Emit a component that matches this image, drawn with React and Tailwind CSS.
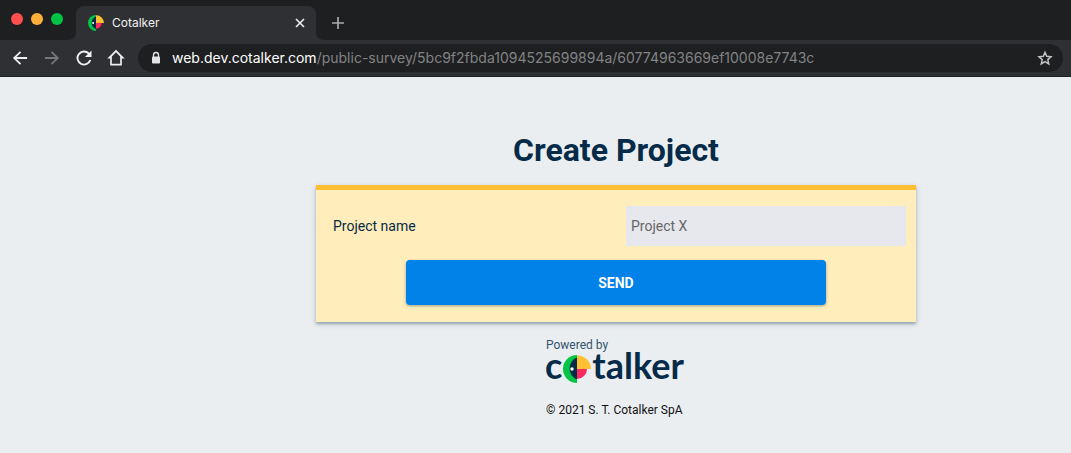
function Mark({ className }) {
  return (
    <svg viewBox="0 0 56 56" className={className} aria-hidden="true">
      <path d="M28 0A28 28 0 0 0 28 56Z" fill="#05c547" />
      <path d="M28 5A21 23 0 0 0 28 49Z" fill="#052b48" />
      <path d="M28 1A27 27 0 0 1 56 28H28Z" fill="#ffc033" />
      <path d="M28 28H48A20 20 0 0 1 28 48Z" fill="#ff2b5e" />
      <circle cx="18" cy="28" r="3.5" fill="#fff" />
    </svg>
  );
}

function NavButton({ label, className, children }) {
  return (
    <button type="button" aria-label={label} className={className}>
      <svg viewBox="0 0 24 24" className="size-5" fill="currentColor" aria-hidden="true">
        {children}
      </svg>
    </button>
  );
}

function TabStrip() {
  return (
    <div className="flex h-10 items-end bg-[#1e1f21]">
      <div className="flex h-10 w-[68px] items-center gap-2 pl-[11px] pb-[2px]">
        <span className="size-3 rounded-full bg-[#ff4f4f]" />
        <span className="size-3 rounded-full bg-[#ffb03b]" />
        <span className="size-3 rounded-full bg-[#00c544]" />
      </div>
      <svg viewBox="0 0 8 8" className="size-2" aria-hidden="true">
        <path d="M0 8A8 8 0 0 0 8 0V8Z" fill="#2f3033" />
      </svg>
      <div className="flex h-[34px] w-60 items-center rounded-t-lg bg-[#2f3033] pl-3 pr-[10px]">
        <Mark className="size-4" />
        <span className="ml-2 flex-1 text-xs text-[#f1f1f1]">Cotalker</span>
        <button type="button" aria-label="Close tab" className="text-[#eeeeee]">
          <svg viewBox="0 0 12 12" className="size-3" fill="none" stroke="currentColor" strokeWidth="1.6" aria-hidden="true">
            <path d="M2 2L10 10M10 2L2 10" />
          </svg>
        </button>
      </div>
      <svg viewBox="0 0 8 8" className="size-2" aria-hidden="true">
        <path d="M8 8A8 8 0 0 1 0 0V8Z" fill="#2f3033" />
      </svg>
      <button type="button" aria-label="New tab" className="flex h-[34px] items-center pl-2 text-[#a9aaac]">
        <svg viewBox="0 0 12 12" className="size-3" fill="none" stroke="currentColor" strokeWidth="1.7" aria-hidden="true">
          <path d="M6 0V12M0 6H12" />
        </svg>
      </button>
    </div>
  );
}

function Toolbar() {
  return (
    <div className="flex h-[37px] items-center border-b border-[#202124] bg-[#2f3033] pr-2">
      <div className="flex gap-3 pl-[10px] text-[#f0f0f0]">
        <NavButton label="Back">
          <path d="M20.500 10.800H7.800l5.600-5.400L12 3.800 3.500 12l8.500 8.200 1.400-1.600L7.800 13.200H20.500z" />
        </NavButton>
        <NavButton label="Forward" className="text-[#77787b]">
          <path d="M12 3.800l-1.400 1.600 5.600 5.400H3.500v2.400h12.700l-5.600 5.400 1.400 1.600L20.500 12z" />
        </NavButton>
        <NavButton label="Reload">
          <path d="M18.4 5.6A9 9 0 1 0 20.7 14.5H18.3A6.7 6.7 0 1 1 16.7 7.3L13.2 10.8H21V3z" />
        </NavButton>
        <NavButton label="Home">
          <path fillRule="evenodd" d="M12 2L1.5 12.5H5V21H19V12.5H22.500zM12 5.200L17 10.200V18.800H7V10.200z" />
        </NavButton>
      </div>
      <div className="ml-3 flex h-7 min-w-0 flex-1 items-center rounded-full bg-[#1e1f21] pl-3 pr-[10px]">
        <svg viewBox="0 0 12 14" className="h-[14px] w-3" aria-hidden="true">
          <rect x="2" y="5.500" width="8" height="7" rx="1" fill="#e4e4e5" />
          <path d="M3.500 6V4A2.500 2.500 0 0 1 8.500 4V6" fill="none" stroke="#e4e4e5" strokeWidth="1.300" />
        </svg>
        <a href="#survey" className="ml-[10px] min-w-0 flex-1 truncate text-sm text-[#828385]">
          <span className="text-white">web.dev.cotalker.com</span>/public-survey/5bc9f2fbda1094525699894a/60774963669ef10008e7743c
        </a>
        <button type="button" aria-label="Bookmark this tab" className="text-[#c4c5c7]">
          <svg viewBox="0 0 24 24" className="size-4" fill="none" stroke="currentColor" strokeWidth="2.200" aria-hidden="true">
            <path d="M12 3.500L14.600 9.500L21 10.100L16.200 14.400L17.600 20.800L12 17.400L6.400 20.800L7.800 14.400L3 10.100L9.400 9.500Z" />
          </svg>
        </button>
      </div>
    </div>
  );
}

export default function App() {
  return (
    <div className="flex min-h-screen flex-col bg-[#eaeef1]">
      <header className="font-['Inter',sans-serif]">
        <TabStrip />
        <Toolbar />
      </header>
      <main className="flex flex-1 flex-col items-center pt-[53px] pl-[161px] font-['Roboto',sans-serif] text-[#052b48]">
        <h1 className="text-[32px] leading-10 font-bold">Create Project</h1>
        <form
          onSubmit={(e) => e.preventDefault()}
          className="mt-[15px] flex w-full max-w-[600px] flex-col items-center border-t-5 border-[#ffc033] bg-[#ffeebb] px-[10px] pt-4 pb-[17px] shadow-[0_2px_5px_rgba(5,43,72,0.25),0_2px_2px_rgba(5,43,72,0.2)]"
        >
          <div className="flex w-full items-center">
            <label htmlFor="project-name" className="flex-1 pl-[7px] text-sm">
              Project name
            </label>
            <input
              id="project-name"
              type="text"
              placeholder="Project X"
              className="h-10 w-[280px] bg-[#e6e8ed] px-[5px] text-sm outline-none placeholder:text-[#666666]"
            />
          </div>
          <button
            type="submit"
            className="mt-[14px] h-[45px] w-full max-w-[420px] rounded bg-[#0082e8] text-sm font-bold text-white shadow-[0_1px_3px_rgba(5,43,72,0.4)]"
          >
            SEND
          </button>
        </form>
        <footer className="mt-4 w-[142px] text-xs">
          <p className="pl-px leading-[14px] text-[#34536b]">Powered by</p>
          <div className="flex h-8 items-end font-['Lato',sans-serif] text-[36px] leading-8 font-bold">
            <span className="h-full -mt-px leading-[26px]">c</span>
            <Mark className="mx-px mb-px size-7" />
            <span className="h-full leading-[26px]">talker</span>
          </div>
          <p className="mt-[18px] pl-px leading-4 text-[#111111]">© 2021 S. T. Cotalker SpA</p>
        </footer>
      </main>
    </div>
  );
}
